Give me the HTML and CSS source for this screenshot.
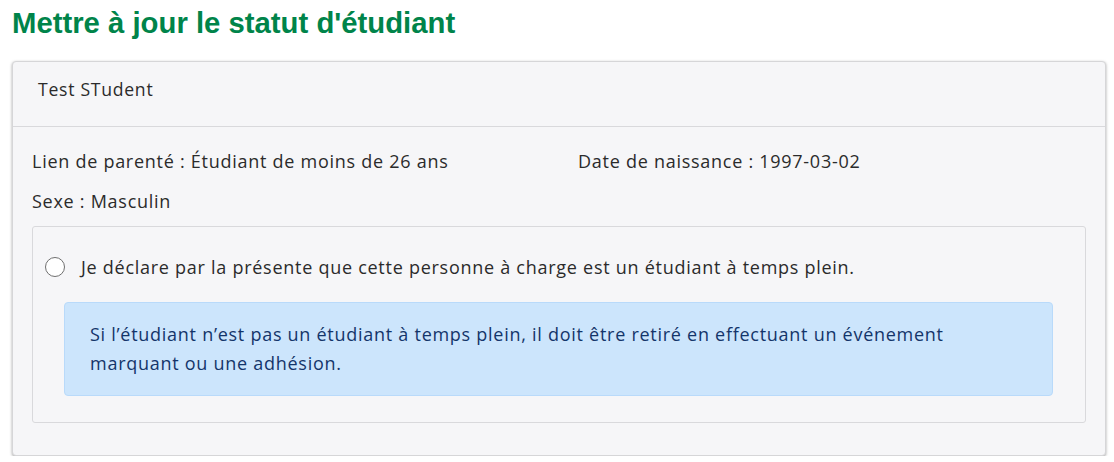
FILE: index.html
```html
<!DOCTYPE html>
<html lang="fr">
<head>
<meta charset="utf-8">
<title>Mettre à jour le statut d'étudiant</title>
<link rel="stylesheet" href="styles.css">
</head>
<body>
<h1 class="title">Mettre à jour le statut d'étudiant</h1>
<div class="card">
  <div class="card-header">Test STudent</div>
  <div class="card-body">
    <div class="info-grid">
      <div class="field">Lien de parenté : Étudiant de moins de 26 ans</div>
      <div class="field">Date de naissance : 1997-03-02</div>
      <div class="field">Sexe : Masculin</div>
    </div>
    <div class="declare-box">
      <label class="radio-row">
        <span class="radio"></span>
        <span class="radio-label">Je déclare par la présente que cette personne à charge est un étudiant à temps plein.</span>
      </label>
      <div class="alert">Si l’étudiant n’est pas un étudiant à temps plein, il doit être retiré en effectuant un événement marquant ou une adhésion.</div>
    </div>
  </div>
</div>
</body>
</html>
```
FILE: styles.css
```css
* { box-sizing: border-box; }
body {
  margin: 0;
  padding: 7px 8px 0 12px;
  background: #ffffff;
  font-family: "Open Sans", Lato, sans-serif;
  color: #2b2b2b;
  letter-spacing: 0.73px;
}
.title {
  margin: 0 0 22px 0;
  font-family: "Liberation Sans", Arial, sans-serif;
  font-weight: bold;
  font-size: 29.3px;
  line-height: 32px;
  letter-spacing: 0;
  color: #00844a;
}
.card {
  background: #f6f6f8;
  border: 1px solid #d6d6d8;
  border-radius: 4px;
  box-shadow: 0 1px 3px rgba(0,0,0,0.35);
  width: 1094px;
}
.card-header {
  padding: 16px 25px 26px;
  font-size: 17.6px;
  line-height: 22px;
  border-bottom: 1px solid #d9d9dc;
}
.card-body {
  padding: 22px 19px 32px;
}
.info-grid {
  display: grid;
  grid-template-columns: 546px 1fr;
  row-gap: 16px;
}
.field {
  font-size: 18px;
  line-height: 24px;
}
.declare-box {
  margin-top: 13px;
  border: 1px solid #d9d9dc;
  border-radius: 3px;
  padding: 28px 32px 26px 12px;
}
.radio-row {
  display: flex;
  align-items: center;
  gap: 16px;
  font-size: 18px;
  line-height: 24px;
}
.radio {
  width: 20px;
  height: 20px;
  border: 1.5px solid #6f6f6f;
  border-radius: 50%;
  background: #ffffff;
  flex: none;
}
.alert {
  margin: 23px 0 0 19px;
  background: #cce5fc;
  border: 1px solid #b9dafa;
  border-radius: 4px;
  padding: 17px 60px 17px 25px;
  font-size: 18px;
  line-height: 29px;
  color: #14356a;
}
```
